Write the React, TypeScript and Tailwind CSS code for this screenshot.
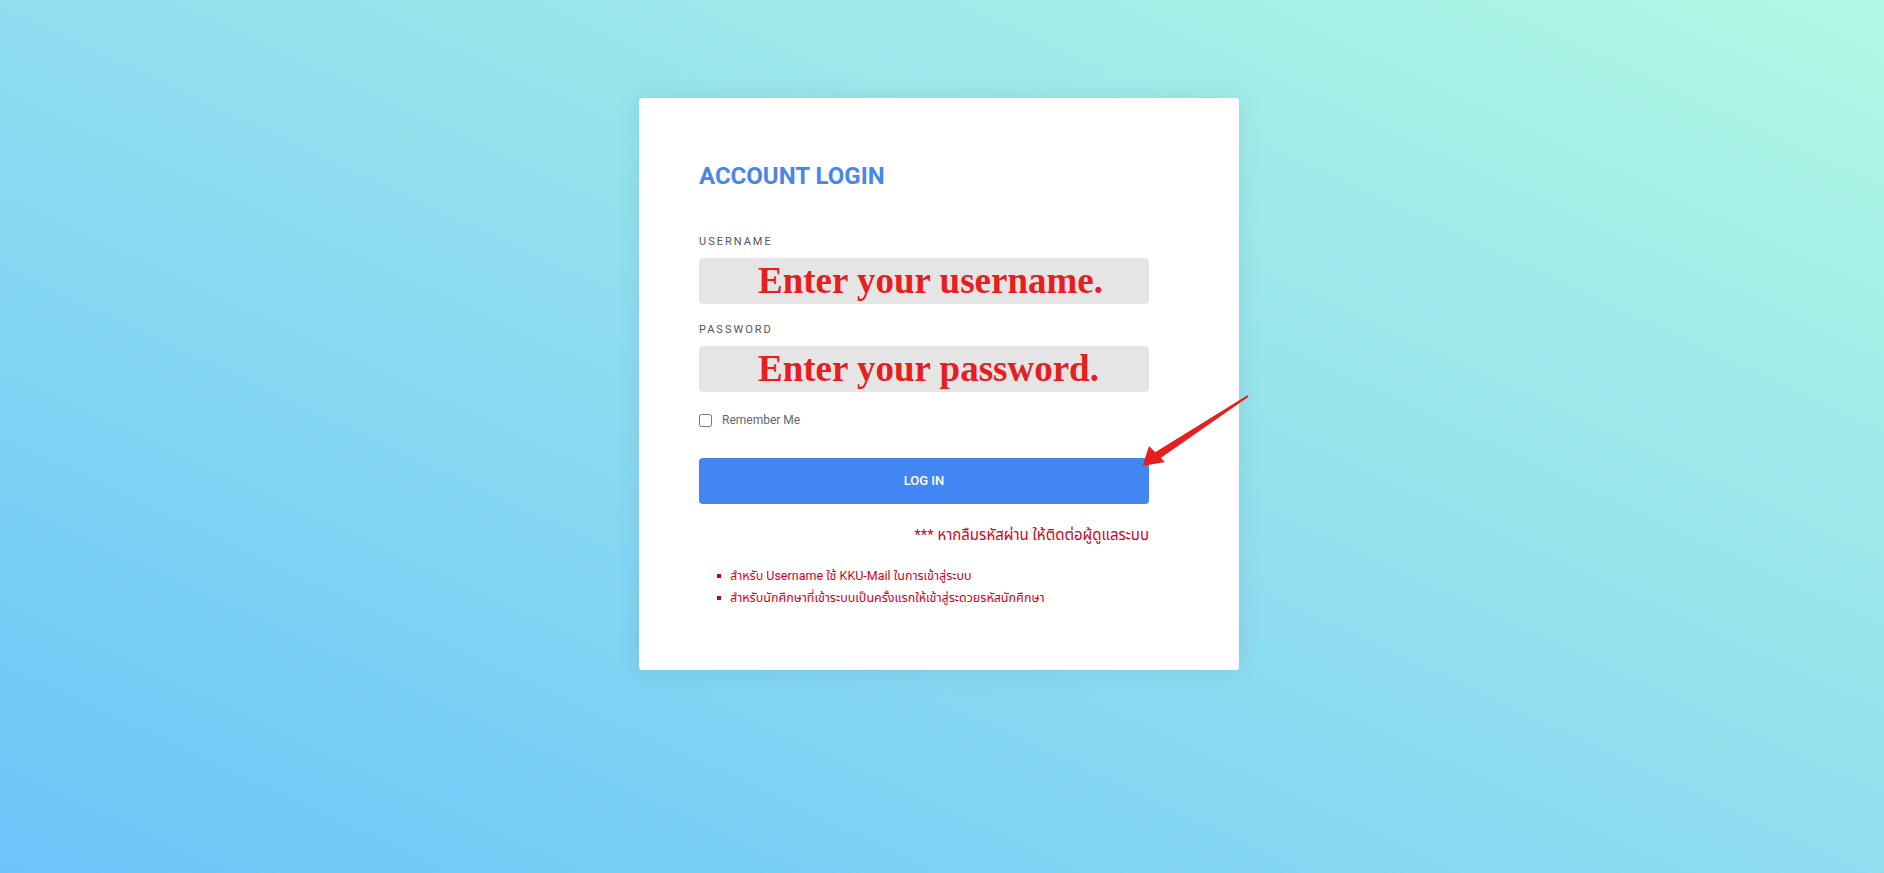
import { useState } from "react";

/* Red pointer drawn over the card, aimed at the login button */
const Pointer = () => (
  <svg
    className="absolute left-[490px] top-[286px] pointer-events-none"
    width="130"
    height="100"
    viewBox="0 0 130 100"
  >
    <polygon points="119.6,12.8 30.2,75 25.8,68.5 118.4,11.2" fill="#e61e1e" />
    <polygon points="13.5,82 20,62 36,78" fill="#e61e1e" />
  </svg>
);

const NOTES = [
  "สำหรับ Username ใช้ KKU-Mail ในการเข้าสู่ระบบ",
  "สำหรับนักศึกษาที่เข้าระบบเป็นครั้งแรกให้เข้าสู่ระดวยรหัสนักศึกษา",
];

export default function App() {
  const [remember, setRemember] = useState(false);

  return (
    <div className="min-h-screen w-full bg-linear-to-tr from-[#6cc4f8] to-[#b2f8e3] flex justify-center items-start pt-[98px] font-['Roboto','Noto_Sans_Thai','Tahoma',sans-serif]">
      <div className="relative w-[600px] mr-[6px] bg-white rounded-[3px] shadow-[0_0_24px_rgba(0,60,90,0.10)] pl-[60px] pr-[90px] pt-[64px] pb-[61px]">
        {/* Title */}
        <h1 className="text-[24px] leading-[28px] font-bold text-[#4a86e8]">ACCOUNT LOGIN</h1>

        {/* Username */}
        <label className="block mt-[45px] mb-[9px] text-[11px] leading-[14px] tracking-[2px] text-[#555]">
          USERNAME
        </label>
        <input
          type="text"
          placeholder="Enter your username."
          className="block w-full h-[46px] rounded-[4px] bg-[#e5e5e5] pl-[59px] outline-none font-['Liberation_Serif',serif] font-bold text-[37px] leading-[46px] text-[#e61e1e] placeholder:text-[#e61e1e] placeholder:opacity-100"
        />

        {/* Password */}
        <label className="block mt-[19px] mb-[9px] text-[11px] leading-[14px] tracking-[2px] text-[#555]">
          PASSWORD
        </label>
        <input
          type="password"
          placeholder="Enter your password."
          className="block w-full h-[46px] rounded-[4px] bg-[#e5e5e5] pl-[59px] outline-none font-['Liberation_Serif',serif] font-bold text-[37px] leading-[46px] text-[#e61e1e] placeholder:text-[#e61e1e] placeholder:opacity-100"
        />

        {/* Remember me */}
        <label className="mt-[20px] flex items-center gap-[10px] h-[16px] text-[12px] text-[#666]">
          <input
            type="checkbox"
            checked={remember}
            onChange={(e) => setRemember(e.target.checked)}
            className="w-[13px] h-[13px] m-0"
          />
          Remember Me
        </label>

        {/* Submit */}
        <button className="mt-[30px] w-full h-[46px] rounded-[4px] bg-[#4286f4] text-white text-[13px] font-medium">
          LOG IN
        </button>

        <p className="mt-[20px] text-right text-[15px] leading-[22px] text-[#d0021b]">
          *** หากลืมรหัสผ่าน ให้ติดต่อผู้ดูแลระบบ
        </p>

        <ul className="mt-[19px] pl-[18px] flex flex-col">
          {NOTES.map((n) => (
            <li key={n} className="flex items-center gap-[9px] text-[12.5px] leading-[22px] text-[#d0021b]">
              <span className="w-[4px] h-[4px] bg-[#d0021b] shrink-0" />
              {n}
            </li>
          ))}
        </ul>

        <Pointer />
      </div>
    </div>
  );
}
